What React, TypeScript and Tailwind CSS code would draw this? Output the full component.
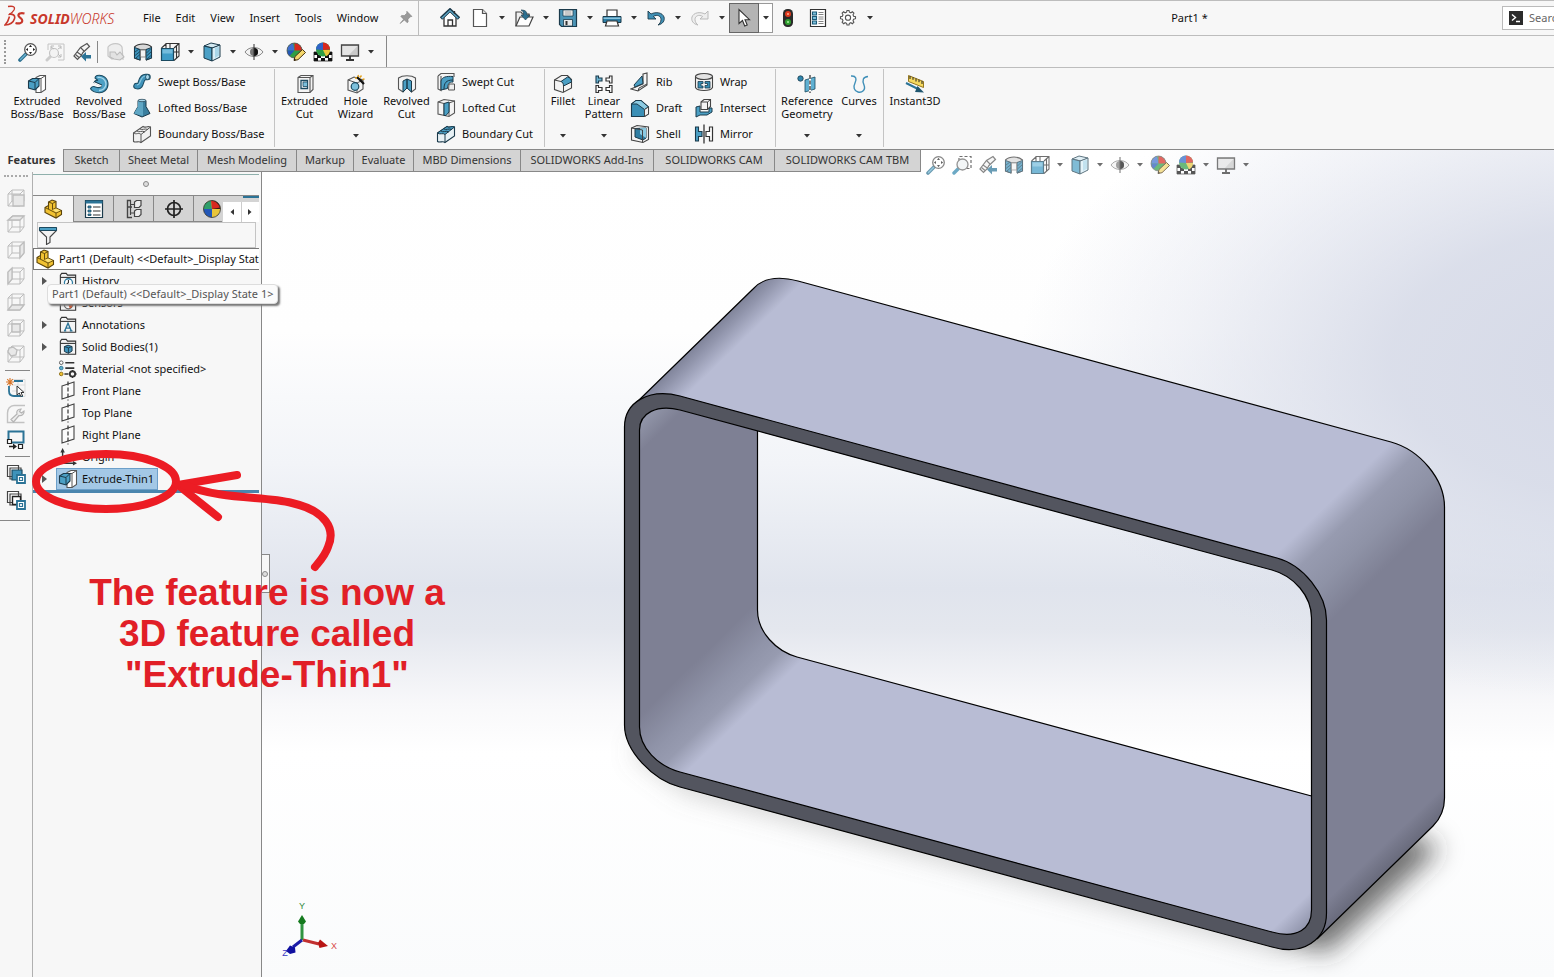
import React from "react";
import clsx from "clsx";

const icons: Record<string, React.ReactNode> = {
  home: (
    <>
      <path d="M4 9v9h12V9l-6-6z" fill="#fff" stroke="#333" strokeWidth="1.3" />
      <path d="M1 10.5 10 2l9 8.5" fill="none" stroke="#1b3a4b" strokeWidth="3.4" />
      <path d="M1.8 10.2 10 2.6l8.2 7.6" fill="none" stroke="#5fa8c8" strokeWidth="1.4" />
      <path d="M8 18v-6h4.500v6M14.500 3v3" fill="none" stroke="#333" strokeWidth="1.3" />
    </>
  ),
  page: (
    <>
      <path d="M3.500 1.500h9l4 4v13h-13z" fill="#fff" stroke="#555" strokeWidth="1.2" />
      <path d="M12.500 1.500v4h4" fill="#ddd" stroke="#555" strokeWidth="1.2" />
    </>
  ),
  open: (
    <>
      <path d="M2 18V4h5l1.500 2H15v3" fill="#eee" stroke="#444" strokeWidth="1.2" />
      <path d="M2 18 6 9h13l-4 9z" fill="#fff" stroke="#444" strokeWidth="1.2" />
      <path d="M7 2c5 0 6 2 6 5h3l-4.500 5L7 7h2.500C9.500 4 9 3 7 2z" fill="#2b6f8f" stroke="#1b3a4b" strokeWidth=".6" />
    </>
  ),
  save: (
    <>
      <path d="M1.500 1.500h17v17h-15l-2-2z" fill="#4b94b6" stroke="#1b3a4b" strokeWidth="1.2" />
      <path d="M5 2h10v6H5z" fill="#fff" stroke="#1b3a4b" strokeWidth=".8" />
      <path d="M6.500 4h7M6.500 6h7" stroke="#777" strokeWidth=".8" />
      <path d="M5.500 11.500h9v6.500h-9z" fill="#e8e8e8" stroke="#1b3a4b" strokeWidth=".8" />
      <path d="M7.500 13h2v4h-2z" fill="#333" />
    </>
  ),
  print: (
    <>
      <path d="M5 8V2h10v6" fill="#fff" stroke="#333" strokeWidth="1.2" />
      <path d="M1 8.500h18v6H1z" fill="#2c7ea6" stroke="#1b3a4b" strokeWidth="1" />
      <path d="M1.500 9.500h17v1.500h-17z" fill="#8cc5de" />
      <path d="M5 13h10l1.500 5h-13z" fill="#fff" stroke="#333" strokeWidth="1.2" />
    </>
  ),
  undo: (
    <path d="M2 3v8h8L7.300 8.500c4-2.500 7.700-.5 7.700 3 0 2.500-1.500 4.500-3 5.500 5-1 7-4.500 6-8C16.500 4.500 10 3.500 5 6z" fill="#4191b6" stroke="#1b3a4b" strokeWidth=".9" />
  ),
  redo: (
    <path d="M18 3v8h-8l2.700-2.500c-4-2.500-7.700-.5-7.700 3 0 2.500 1.500 4.500 3 5.500-5-1-7-4.500-6-8C3.500 4.500 10 3.500 15 6z" fill="#eee" stroke="#bbb" strokeWidth="1" />
  ),
  cursor: (
    <path d="M5 1.500v14l3.500-3 2.200 5.500 2.500-1-2.200-5.300h4.500z" fill="#fff" stroke="#333" strokeWidth="1.1" />
  ),
  traffic: (
    <>
      <rect x="5" y="1" width="10" height="18" rx="4.500" fill="#2b2b2b" />
      <circle cx="10" cy="6" r="3" fill="#e03a1e" />
      <circle cx="10" cy="6" r="1" fill="#ffb59a" />
      <circle cx="10" cy="14" r="3" fill="#2f9e2f" />
      <circle cx="10" cy="14" r="1" fill="#a8f0a0" />
    </>
  ),
  options: (
    <>
      <path d="M2.500 1.500h15v17h-15z" fill="#fff" stroke="#333" strokeWidth="1.2" />
      <path d="M4.500 4h4v3h-4zM4.500 8.500h4v3h-4zM4.500 13h4v3h-4z" fill="#7cc0dc" stroke="#1b5a78" strokeWidth="1.1" />
      <path d="M10.500 4.500h5M10.500 6.500h5M10.500 9h5M10.500 11h5M10.500 13.500h5M10.500 15.500h5" stroke="#777" strokeWidth=".9" />
    </>
  ),
  gear: (
    <>
      <path d="M9 2.500h2l.4 1.700 1.500.6 1.500-1 1.500 1.400-.9 1.600.6 1.500 1.900.4v2l-1.900.5-.6 1.500.9 1.500-1.500 1.500-1.500-1-1.500.6-.4 1.700H9l-.4-1.700-1.500-.6-1.500 1-1.500-1.500.9-1.500-.6-1.500-1.900-.5v-2l1.900-.4.6-1.500-.9-1.600L5.600 3.800l1.500 1 1.500-.6z" fill="#fff" stroke="#555" strokeWidth="1.100" />
      <circle cx="10" cy="9.700" r="2.600" fill="#fff" stroke="#555" strokeWidth="1.100" />
    </>
  ),
  pin: (
    <path d="M11 1.500 17.500 8l-2 .5-3 3 .2 3.500-1.200 1L8 12.500 2.500 17 7 11.500 3.500 8l1-1.200 3.500.2 3-3z" fill="#999" stroke="#777" strokeWidth=".6" />
  ),
  zoomFit: (
    <>
      <path d="m2 18 6-6" stroke="#2b6f8f" strokeWidth="3.600" strokeLinecap="round" />
      <path d="m2.500 17.500 5-5" stroke="#6cb4d2" strokeWidth="1.400" strokeLinecap="round" />
      <circle cx="12.500" cy="7.500" r="5.800" fill="#fff" stroke="#555" strokeWidth="1.300" />
      <path d="M12.500 2.800 14 5h-3zM12.500 12.200 14 10h-3zM7.800 7.500 10 6v3zM17.200 7.500 15 6v3z" fill="#222" />
    </>
  ),
  zoomAreaGray: (
    <>
      <path d="m2 18 5-5" stroke="#ccc" strokeWidth="3" strokeLinecap="round" />
      <circle cx="9" cy="11" r="4.500" fill="#f3f3f3" stroke="#c4c4c4" strokeWidth="1.200" />
      <path d="M3 2h16v16h-6M3 2v6" fill="none" stroke="#c4c4c4" strokeWidth="1" />
      <path d="m6 5 3 2M16 5l-3 2M16 15l-3-3M6 7V4h3M16 7V4h-3M16 12v3h-3" fill="none" stroke="#bbb" strokeWidth="1" />
    </>
  ),
  zoomArea: (
    <>
      <path d="M7 6V1.500h12v12h-4" fill="none" stroke="#333" strokeWidth="1.200" strokeDasharray="3 2" />
      <path d="m2 18 5-5" stroke="#2f86ad" strokeWidth="3.400" strokeLinecap="round" />
      <circle cx="10.500" cy="9.500" r="5.500" fill="#eef3f5" stroke="#666" strokeWidth="1.300" />
    </>
  ),
  prevView: (
    <>
      <path d="m2 14 3.500 3.500L9 14l2-3.500 6.500-6L15 1.500l-6.500 4L5 10z" fill="#f4f4f4" stroke="#555" strokeWidth="1.200" />
      <path d="m5 10 5 3.500M8.500 5.500 12 9M3.500 12.500l3.500 3" stroke="#555" strokeWidth="1.100" />
      <path d="m9 14.500 5-4.500v3h5v3.500h-5v3z" fill="#2b7396" />
    </>
  ),
  viewGray: (
    <>
      <path d="M2 5c4-5 12-4 14 0l1 12-5-2-6 2-4-3z" fill="#eee" stroke="#c6c6c6" strokeWidth="1.200" />
      <path d="M4 10h5l2 3 3-3 4 5-4 3-6-1-4-2z" fill="#e2e2e2" stroke="#bbb" strokeWidth="1.100" />
    </>
  ),
  section: (
    <>
      <path d="M1.500 5c4-4 13-4 17 0v11l-5 2V8H7v10l-5.500-2z" fill="#d8d8d8" stroke="#333" strokeWidth="1.100" />
      <path d="M1.500 5.500 7 7.500V18l-5.500-2zM13 7.500l5.500-2V16L13 18z" fill="#3b92bb" stroke="#1b3a4b" strokeWidth="1" />
      <path d="m2 10 4-3M2 13.500l5-4M3 16l4-3.500M13.500 11l4-4M13.500 14l5-4.500M14 17l4-3.500" stroke="#1b3a4b" strokeWidth=".8" />
      <path d="M7.500 8h5v7h-5z" fill="#f3f3f3" stroke="#666" strokeWidth=".7" />
    </>
  ),
  orient: (
    <>
      <path d="M6 6V1.500h13V14l-5 4.500M14 6l5-4.500M1.500 6l5-4.500M10 2v4M14 10h5M16.500 4v12" fill="none" stroke="#333" strokeWidth="1.100" />
      <path d="M1.500 6.500h12v12h-12z" fill="#3f9bc6" stroke="#1b4a60" strokeWidth="1.200" />
      <path d="M2.500 7.500h10v4h-10z" fill="#74bbdb" />
    </>
  ),
  cube: (
    <>
      <path d="m2 4 7-3 9 2-7 3z" fill="#d4e9f1" stroke="#1b3a4b" strokeWidth="1" />
      <path d="M2 4v12l8 3V6z" fill="#4ba0c6" stroke="#1b3a4b" strokeWidth="1" />
      <path d="m10 6 8-3v12l-8 4z" fill="#d9eef7" stroke="#1b3a4b" strokeWidth="1" />
      <path d="m13 6 4-1.500v9L13 16z" fill="#a9d6e9" />
    </>
  ),
  eye: (
    <>
      <path d="M1 10c4-6 14-6 18 0-4 6-14 6-18 0z" fill="#f2f2f2" stroke="#888" strokeWidth="1" />
      <circle cx="10" cy="10" r="4" fill="#777" />
      <path d="M10 6a4 4 0 0 1 0 8z" fill="#111" />
      <path d="M10 2v16" stroke="#333" strokeWidth="1" />
    </>
  ),
  ballPencil: (
    <>
      <circle cx="8.500" cy="8.500" r="7.500" fill="#2f9e44" />
      <path d="M8.500 8.500 7 1.100A7.500 7.500 0 0 0 1 8.500z" fill="#3f6fd0" />
      <path d="M8.500 8.500V1a7.500 7.500 0 0 1 7.500 7.500z" fill="#d8281f" />
      <path d="M8.500 8.500H1a7.500 7.500 0 0 0 2.500 5.600z" fill="#2458b8" />
      <circle cx="8.500" cy="8.500" r="7.500" fill="none" stroke="#555" strokeWidth=".8" />
      <path d="m8 18.500 1-4 7.500-7 3 3-7.500 7.200z" fill="#f3d66b" stroke="#4a3310" strokeWidth="1" />
      <path d="m8 18.500.5-2 1.500 1.500z" fill="#111" />
    </>
  ),
  ballScene: (
    <>
      <path d="M1 10h18v9H1z" fill="#fff" stroke="#222" strokeWidth=".8" />
      <path d="M1 10h4v3H1zM15 10h4v3h-4zM4 13h4v3H4zM12 13h4v3h-4zM1 16h4v3H1zM8 16h4v3H8zM15 16h4v3h-4z" fill="#111" />
      <circle cx="10" cy="7.500" r="7" fill="#2f9e44" />
      <path d="M10 8V.5A7 7 0 0 0 3 7.500z" fill="#2f63c8" />
      <path d="M10 8V.5a7 7 0 0 1 7 7z" fill="#d8281f" />
      <path d="M10 8h7a7 7 0 0 1-4 6.300z" fill="#e9c63b" />
    </>
  ),
  monitor: (
    <>
      <path d="M1.500 3h17v11h-17z" fill="#c9c9c9" stroke="#444" strokeWidth="1.300" />
      <path d="M2.500 4h15L9 13H2.500z" fill="#e4e4e4" />
      <path d="M10 14v3.500M6 18h8" stroke="#333" strokeWidth="1.800" />
    </>
  ),
  extrude: (
    <>
      <path d="M9 3.500 13 1.500h5.500v14L14 18.500H9z" fill="#fff" stroke="#555" strokeWidth="1.100" />
      <path d="M14 4.500v14M14 4.500l4.500-3M9 4.500h5" fill="none" stroke="#555" strokeWidth="1" />
      <path d="m1.500 7 4-2.500H12V12l-4 4-6.500-2z" fill="#4b9fc4" stroke="#1b3a4b" strokeWidth="1.100" />
      <path d="m1.500 7 6.500 1.500V16M8 8.500l4-4" fill="none" stroke="#1b3a4b" strokeWidth="1" />
    </>
  ),
  revolve: (
    <>
      <path d="M8 1.500c6-1.500 11 3 11 8.500 0 6-5 9-9 8.700-4-.2-7-1.700-8.500-4 1-2 3-2.700 5-1.700 3 1.200 5.500.5 6-1L5 8.500C6 6.500 7 6 9 6.500L6 4c0-1 .8-2 2-2.500z" fill="#4b9fc4" stroke="#1b4a60" strokeWidth="1.100" />
      <path d="M8.500 3.500c4-.8 8.500 2 8.500 6.500s-4 6.500-7 6.500" fill="none" stroke="#a7d6ea" strokeWidth="1.300" />
      <path d="m5 8.500 7.500 3.500" stroke="#f7f7f7" strokeWidth="1.400" />
      <path d="m5 7.500 8 3.500" stroke="#1b3a4b" strokeWidth="1" />
    </>
  ),
  sweep: (
    <>
      <path d="M4.500 14c6 2 3-9 9-9h2" fill="none" stroke="#1b4a60" strokeWidth="6.500" strokeLinecap="round" />
      <path d="M4.500 14c6 2 3-9 9-9h2" fill="none" stroke="#3f93ba" strokeWidth="4.500" strokeLinecap="round" />
      <path d="M5 12.800c4 1 2.500-8.500 8.500-8.800" fill="none" stroke="#8cc8e0" strokeWidth="1.200" />
      <ellipse cx="15.500" cy="5" rx="2" ry="2.500" fill="#a7d6ea" stroke="#1b4a60" strokeWidth=".8" />
    </>
  ),
  loft: (
    <>
      <path d="M6 2.500h8v6l4 7-8 3.500-8-3.500 4-7z" fill="#3a7f9f" stroke="#1b3a4b" strokeWidth="1" />
      <path d="M6 2.500h5V18l-9-2.500 4-7z" fill="#5fa6c4" />
      <ellipse cx="10" cy="2.500" rx="4" ry="1.200" fill="#a7d6ea" stroke="#1b3a4b" strokeWidth=".7" />
    </>
  ),
  boundary: (
    <>
      <path d="M1.500 9 11 2.500c2 2 4-1 7.500.5v9L9 18.500c-2-2-5 .5-7.500-1z" fill="#f1f1f1" stroke="#555" strokeWidth="1.100" />
      <path d="M1.500 9c3 2 5-1 7.500 1.500L18.500 3M9 10.500v8M5 7c2 2 5-1 8 1M8 5c2 1.500 5-1 8 .5" fill="none" stroke="#555" strokeWidth="1" />
    </>
  ),
  boundaryCut: (
    <>
      <path d="M1.500 9 11 2.500c2 2 4-1 7.500.5v9L9 18.500c-2-2-5 .5-7.500-1z" fill="#e7f1f5" stroke="#1b3a4b" strokeWidth="1.100" />
      <path d="M1.500 9 11 2.500c2 2 4-1 7.500.5L9 10.500c-2-2-5 .5-7.500-1.500z" fill="#4b9fc4" stroke="#1b3a4b" strokeWidth="1" />
      <path d="M9 10.500v8M5 7c2 2 5-1 8 1M8 5c2 1.500 5-1 8 .5" fill="none" stroke="#1b3a4b" strokeWidth="1" />
    </>
  ),
  cutExtrude: (
    <>
      <path d="m3 3.500 3-2h12v14l-3 3H3z" fill="#f4f4f4" stroke="#555" strokeWidth="1.100" />
      <path d="M3 3.500h12v15M15 3.500l3-2" fill="none" stroke="#555" strokeWidth="1.100" />
      <path d="M6 6.500h6.500v8H6z" fill="#fff" stroke="#1b4a60" strokeWidth="1.300" />
      <path d="M8 8h4.500v4.500H8z" fill="#7cc0dc" stroke="#1b4a60" strokeWidth=".8" />
    </>
  ),
  hole: (
    <>
      <path d="m2 6 6-3 9 3v9l-6 4-9-3z" fill="#f4f4f4" stroke="#555" strokeWidth="1.100" />
      <path d="m2 6 9 3v10M11 9l6-3" fill="none" stroke="#555" strokeWidth="1" />
      <circle cx="9" cy="12.500" r="3.800" fill="#7cc0dc" stroke="#1b4a60" strokeWidth="1.200" />
      <path d="m11 3 7 7" stroke="#111" strokeWidth="2.200" />
      <path d="m12 1 .8 2M15.500 1.500 14 3.500M18.500 5l-2 .5M9 4h2" stroke="#e4a11b" strokeWidth="1.400" />
    </>
  ),
  cutRevolve: (
    <>
      <path d="M1.500 4c4-3 13-3 17 0v11l-4 3-4.500-5-4 5-4.500-3z" fill="#f4f4f4" stroke="#555" strokeWidth="1.100" />
      <path d="M10 5v9l-4 4V7zM10 5l4.500 2v11L10 14z" fill="#4b9fc4" stroke="#1b3a4b" strokeWidth="1" />
    </>
  ),
  cutSweep: (
    <>
      <path d="M2 4 5 1.500h13V5M2 4v13l3 1.500V4" fill="#f4f4f4" stroke="#555" strokeWidth="1.100" />
      <path d="M5 18V9c1-4 5-5 12-4.500V10c-4 0-5 1.500-5.500 6.500z" fill="#4b9fc4" stroke="#1b3a4b" strokeWidth="1" />
      <path d="M8 17c0-6 2-9 9-9" fill="none" stroke="#1b3a4b" strokeWidth="1" />
      <path d="M13 12h5.500v6h-6z" fill="#eee" stroke="#555" strokeWidth="1" />
    </>
  ),
  cutLoft: (
    <>
      <path d="m2 4 6-2.500L18.500 3v12L13 18.500 2 16z" fill="#f4f4f4" stroke="#555" strokeWidth="1.100" />
      <path d="M2 4l6 1.500v12M13 5l5.500-2M13 5v13" fill="none" stroke="#555" strokeWidth="1" />
      <path d="M8 5.500 13 4v10l-3 3.500H8z" fill="#4b9fc4" stroke="#1b3a4b" strokeWidth="1" />
    </>
  ),
  fillet: (
    <>
      <path d="m1.500 6 7-4.500h6l4 4V14L10 18.500l-8.500-3z" fill="#f4f4f4" stroke="#444" strokeWidth="1.100" />
      <path d="M8 7.500 14.500 3c2.500.5 4 2.500 4 5L10.500 12c0-2.500-1-4-2.500-4.500z" fill="#4b9fc4" stroke="#1b3a4b" strokeWidth="1" />
      <path d="m1.500 6 6.500 1.500M10.500 12v6" stroke="#444" strokeWidth="1" />
    </>
  ),
  linear: (
    <>
      <path d="M2 2h2.500v2H8v3H4.500v2H2z" fill="#6cb4d2" stroke="#1b3a4b" strokeWidth="1.100" />
      <path d="M18 2h-2.500v2H12v3h3.500v2H18zM2 11.500h2.500v2H8v3H4.500v2H2zM18 11.500h-2.500v2H12v3h3.500v2H18z" fill="#fff" stroke="#333" strokeWidth="1.200" />
    </>
  ),
  rib: (
    <>
      <path d="m13 2 4-1v12l-9 6-7-2 12-5z" fill="#f4f4f4" stroke="#444" strokeWidth="1.100" />
      <path d="m12 4-8 9 1 2 8-3.500z" fill="#4b9fc4" stroke="#1b3a4b" strokeWidth="1" />
      <path d="m8 19 1-3 8-4" fill="none" stroke="#444" strokeWidth="1" />
    </>
  ),
  draft: (
    <>
      <path d="M1.500 6 6 2.500h5l7.500 6.500v7l-4 2.500h-13z" fill="#3a8fb6" stroke="#1b3a4b" strokeWidth="1.100" />
      <path d="M1.500 6 6 2.500h5L18.500 9l-4 2.500L7 6z" fill="#8ccbe3" stroke="#1b3a4b" strokeWidth="1" />
      <path d="M14.500 11.500 18.500 9v7l-4 2.500z" fill="#f1f1f1" stroke="#444" strokeWidth="1" />
    </>
  ),
  shell: (
    <>
      <path d="M1.500 4 7 1.500l11.500 1.500v12.500l-5.500 3L1.500 16z" fill="#f4f4f4" stroke="#444" strokeWidth="1.100" />
      <path d="M5 4.500 16 4v10l-3 2-8-3z" fill="#2f7ea3" stroke="#1b3a4b" strokeWidth="1" />
      <path d="m10 4.300 6-.3v10l-6-4z" fill="#8ccbe3" />
      <path d="M1.500 4 12.500 6v12.500" fill="none" stroke="#444" strokeWidth="1" />
    </>
  ),
  wrap: (
    <>
      <path d="M1.500 4.500v11c2 4 15 4 17 0v-11" fill="#f4f4f4" stroke="#444" strokeWidth="1.100" />
      <ellipse cx="10" cy="4.500" rx="8.500" ry="3" fill="#e3e3e3" stroke="#444" strokeWidth="1.100" />
      <path d="M4 9.500h5v2H7v2.500h2v2H4zM11 9.500h5v6.500h-5v-2.500h2.500v-2H11z" fill="#3a8fb6" stroke="#1b3a4b" strokeWidth=".8" />
    </>
  ),
  intersect: (
    <>
      <path d="M2 9l4-1v6h9v-4h3v4l-5 3H6l-4 2z" fill="#4b9fc4" stroke="#1b3a4b" strokeWidth="1" />
      <path d="m7 4 3-2.500h6.500v7l-3 3H7z" fill="#f4f4f4" stroke="#444" strokeWidth="1.100" />
      <path d="M7 4h6.500v7.500M13.500 4l3-2.500" fill="none" stroke="#444" strokeWidth="1" />
    </>
  ),
  mirror: (
    <>
      <path d="M1.500 3h3v4.500h3.500v5H4.500V17h-3z" fill="#4b9fc4" stroke="#1b3a4b" strokeWidth="1.100" />
      <path d="M18.500 3h-3v4.500H12v5h3.500V17h3z" fill="#fff" stroke="#333" strokeWidth="1.200" />
      <path d="M10 .5v19" stroke="#222" strokeWidth="1.200" />
    </>
  ),
  refGeo: (
    <>
      <circle cx="3.500" cy="4.500" r="2.700" fill="#2f86ad" stroke="#1b3a4b" strokeWidth=".8" />
      <path d="m8 6 10-3v12L8 18z" fill="#5fb0d2" stroke="#1b4a60" strokeWidth=".8" />
      <path d="M13 1v18" stroke="#fff" strokeWidth="2" />
      <path d="M13 1v18" stroke="#222" strokeWidth="1.200" strokeDasharray="4 1.500" />
    </>
  ),
  curves: (
    <path d="M2 2h1c4 0 5 3 3 7s-1 8 3 9 8-2 6-7-1-8 4-8.500" fill="none" stroke="#3f8fb8" strokeWidth="1.400" />
  ),
  instant: (
    <>
      <path d="m3.500 1.500 15 6v6l-15-6z" fill="#f5d95f" stroke="#8a6a10" strokeWidth=".9" />
      <path d="M5 2v3M8 3.300v2.500M11 4.500v3M14 5.700v2.500M17 7v3" stroke="#222" strokeWidth="1" />
      <path d="m1 9 12 6" stroke="#2b7396" strokeWidth="2" />
      <path d="m12.500 12 6.500 6.500-9-.5z" fill="#1f566f" />
    </>
  ),
  part: (
    <>
      <path d="M2 8.500 5.500 6.500V3L9 1l4 1.500V9l5.500 2.500v4L13 19 2 13.500z" fill="#f1c232" stroke="#5a430a" strokeWidth="1.100" />
      <path d="m5.500 3 4 1.500L13 2.500M9.500 4.500v6L13 9M2 8.500 13 14v5M13 14l5.500-2.500M5.500 6.500v3.500" fill="none" stroke="#5a430a" strokeWidth=".9" />
      <path d="m10 10.800 3-1.200 4.500 2L13 13.300z" fill="#fbe27a" />
    </>
  ),
  property: (
    <>
      <path d="M1.500 1.500h17v17h-17z" fill="#fff" stroke="#1b3a4b" strokeWidth="1.200" />
      <path d="M1.500 1.500h17V4.500h-17z" fill="#2b7396" />
      <path d="M4 7h3v2H4zM4 11h3v2H4zM4 15h3v1.500H4z" fill="#3f93ba" stroke="#1b4a60" strokeWidth=".8" />
      <path d="M9 8h7.500M9 12h7.500M9 16h7.500" stroke="#333" strokeWidth="1.200" />
    </>
  ),
  config: (
    <>
      <path d="M7 1.500H3.500v17H8M3.500 8H8" fill="none" stroke="#444" strokeWidth="1.400" />
      <path d="M6.500 1.500V16M6.500 5.500H11M6.500 14H11" fill="none" stroke="#444" strokeWidth="1.200" />
      <path d="m10.500 3 2-1.500H17v5l-2 2h-4.500zM10.500 12l2-1.500H17v5l-2 2h-4.500z" fill="#eee" stroke="#444" strokeWidth="1.200" />
    </>
  ),
  target: (
    <>
      <circle cx="10" cy="10" r="6.500" fill="none" stroke="#222" strokeWidth="1.700" />
      <path d="M10 1v18M1 10h18" stroke="#222" strokeWidth="1.700" />
    </>
  ),
  ball: (
    <>
      <circle cx="10" cy="10" r="8.500" fill="#e9c63b" />
      <path d="M10 10 9 1.500A8.500 8.500 0 0 0 1.500 10z" fill="#2f9e6a" />
      <path d="M10 10V1.500A8.500 8.500 0 0 1 18.500 10z" fill="#3d1a18" />
      <path d="M10 10H1.500a8.500 8.500 0 0 0 8.500 8.500z" fill="#2458b8" />
      <path d="M10 10 9 1.500c4 0 7 3 9 7z" fill="#d8281f" />
      <circle cx="10" cy="10" r="8.500" fill="none" stroke="#333" strokeWidth=".8" />
    </>
  ),
  filter: (
    <>
      <path d="M1.500 3h17v2.500L12 12v5.500l-3.500 2V12L1.500 5.500z" fill="#f2f2f2" stroke="#444" strokeWidth="1.100" />
      <path d="M1.500 2.500h17v3h-17z" fill="#4b9fc4" stroke="#1b4a60" strokeWidth="1" />
    </>
  ),
  history: (
    <>
      <path d="M1.500 18V3.500l1.500-2h5l1.500 2h9V18z" fill="#f4f4f4" stroke="#333" strokeWidth="1.200" />
      <path d="M1.500 6h17" stroke="#333" strokeWidth="1.200" />
      <circle cx="10.500" cy="12" r="4.500" fill="#fff" stroke="#2f7ea3" strokeWidth="1.400" />
      <path d="M10.500 9v3l-2 1.500" fill="none" stroke="#333" strokeWidth="1.200" />
    </>
  ),
  sensors: (
    <>
      <path d="M1.500 18V3.500l1.500-2h5l1.500 2h9V18z" fill="#f4f4f4" stroke="#333" strokeWidth="1.200" />
      <path d="M1.500 6h17" stroke="#333" strokeWidth="1.200" />
      <circle cx="10.500" cy="12" r="4.500" fill="#fff" stroke="#666" strokeWidth="1.400" />
      <path d="M10.500 12 14 9a4.500 4.500 0 0 1-2 7.200z" fill="#d9542b" />
    </>
  ),
  annotations: (
    <>
      <path d="M1.500 18V3.500l1.500-2h5l1.500 2h9V18z" fill="#f4f4f4" stroke="#333" strokeWidth="1.200" />
      <path d="M1.500 6h17" stroke="#333" strokeWidth="1.200" />
      <path d="M6.500 16 10 8l3.500 8M7.800 13.500h4.500M5.500 16.500h2.500M12 16.500h3" fill="none" stroke="#2b7396" strokeWidth="1.500" />
    </>
  ),
  bodies: (
    <>
      <path d="M1.500 18V3.500l1.500-2h5l1.500 2h9V18z" fill="#f4f4f4" stroke="#333" strokeWidth="1.200" />
      <path d="M1.500 6h17" stroke="#333" strokeWidth="1.200" />
      <path d="m6 9.500 4-1.500 4.500 1.500v5L10.500 17 6 15z" fill="#3f93ba" stroke="#1b3a4b" strokeWidth="1.100" />
      <path d="m6 9.500 4.500 1.500v6M10.500 11l4-1.500" fill="none" stroke="#1b3a4b" strokeWidth="1" />
    </>
  ),
  material: (
    <>
      <circle cx="2.500" cy="3" r="2" fill="#fff" stroke="#555" />
      <circle cx="2.500" cy="9" r="2" fill="#5fb0c8" stroke="#2b7396" />
      <circle cx="2.500" cy="15.500" r="2" fill="#f1c232" stroke="#8a6a10" />
      <path d="M7 3h10M7 9h10M6 15.500h4" stroke="#333" strokeWidth="1.800" />
      <circle cx="15" cy="15.500" r="3" fill="none" stroke="#333" strokeWidth="2" />
      <path d="M15 11v2M15 18v2M10.500 15.500h2M17.500 15.500h2" stroke="#333" strokeWidth="1.500" />
    </>
  ),
  plane: (
    <>
      <path d="m4 5 12-4v13L4 18z" fill="#fbfbfb" stroke="#444" strokeWidth="1.100" />
      <path d="M10 .5v19" stroke="#333" strokeWidth="1.200" strokeDasharray="4 2" />
    </>
  ),
  origin: (
    <>
      <path d="M4 17V4M4 17h13M4 17l3-6" fill="none" stroke="#333" strokeWidth="1.600" />
      <path d="m4 0 2.500 5h-5zM20 17l-4.500 2.500v-5z" fill="#333" />
    </>
  ),
  sketchStar: (
    <>
      <path d="M6 1.500h13M19 1.500v17H6M12 1v18M6 7h13M6 13h13" fill="none" stroke="#ddd" />
      <path d="M3 8v5c0 3 2 5 5 5h9M8 3h9" fill="none" stroke="#2b7396" strokeWidth="1.800" />
      <path d="M4 0v8M0 4h8M1.200 1.200l5.600 5.600M6.800 1.200 1.200 6.800" stroke="#d9772b" strokeWidth="1.100" />
      <path d="M11 8v9l2.300-2 1.500 3.500 1.700-.8L15 14.500h3z" fill="#fff" stroke="#333" />
    </>
  ),
  wrench: (
    <>
      <path d="M19 1.500H8C4 1.500 1.500 5 1.500 9v9.500h17" fill="none" stroke="#c2c2c2" strokeWidth="1.400" />
      <path d="M5 15.500 11 10c-1-3 1-5 4-5l-1.500 2.500 2 1.500L18 7c.5 3-2 5-5 4.500L7.500 18z" fill="#eee" stroke="#b5b5b5" strokeWidth="1.200" />
    </>
  ),
  screen: (
    <>
      <path d="M2.500 1.500h15v11h-15z" fill="#f7f7f7" stroke="#2b7396" strokeWidth="2" />
      <path d="M1.500 9.500h4v4h-4zM12.500 14.500h4v4h-4z" fill="#fff" stroke="#222" strokeWidth="1.200" />
      <path d="M3 16.500h6" stroke="#222" strokeWidth="1.500" />
      <path d="M7 13.500v6l4-3z" fill="#222" />
    </>
  ),
  stackA: (
    <>
      <path d="M1.500 1.500h11v11h-11zM4 4h11v11H4z" fill="#fff" stroke="#444" strokeWidth="1.200" />
      <path d="M6 6h10v10H6z" fill="#3f93ba" stroke="#1b4a60" strokeWidth="1.200" />
      <path d="M11 11h8v8h-8z" fill="#fff" stroke="#2b7396" strokeWidth="1.800" />
      <path d="M13.500 13.500h3v3h-3z" fill="#fff" stroke="#2b7396" strokeWidth="1.200" />
    </>
  ),
  stackB: (
    <>
      <path d="M1.500 1.500h11v11h-11zM4 4h11v11H4z" fill="#fff" stroke="#444" strokeWidth="1.200" />
      <path d="M6.500 6.500h8v8h-8z" fill="#fff" stroke="#222" strokeWidth="1.400" />
      <path d="M11 11h8v8h-8z" fill="#fff" stroke="#2b7396" strokeWidth="1.800" />
      <path d="M13.500 13.500h3v3h-3z" fill="#fff" stroke="#2b7396" strokeWidth="1.200" />
    </>
  ),
};

// wireframe cubes of the standard views, one face tinted in each
const cubeFaces = [
  "M7 7h11v11H7z",
  "M2 6 7 2h11l-4 4z",
  "M14 6l4-4v11l-4 5z",
  "M2 6l4-4v11l-4 5z",
  "M2 18l4-5h12l-4 5z",
  "M6 6h8v8H6z",
  "M7 3l4 3-1 5-5 1-3-4 1-4z",
];

const Icon = ({ name, className }: { name: string; className?: string }) => (
  <svg viewBox="0 0 20 20" className={clsx("shrink-0", className ?? "h-5 w-5")} aria-hidden="true">
    {icons[name]}
  </svg>
);

const Arrow = ({ className }: { className?: string }) => (
  <svg viewBox="0 0 6 4" className={clsx("h-1 w-1.5", className)} aria-hidden="true">
    <path d="M0 0h6L3 3.500z" fill="#333" />
  </svg>
);

const Caret = ({ label, className }: { label: string; className: string }) => (
  <button aria-label={label} className={clsx("flex h-full shrink-0 items-center justify-center", className)}>
    <Arrow />
  </button>
);

const Tool = ({ name, label, className }: { name: string; label: string; className: string }) => (
  <button aria-label={label} className={clsx("flex shrink-0 items-center justify-center", className)}>
    <Icon name={name} />
  </button>
);

const menus = ["File", "Edit", "View", "Insert", "Tools", "Window"];

const TopBar = () => (
  <header className="flex h-9 overflow-hidden border-y border-[#bdbdbd]">
    <div className="flex w-[419px] shrink-0 items-center border-r border-[#bdbdbd]">
      <div className="flex w-[135px] items-center text-[#c8372b]">
        <svg viewBox="0 0 28 28" className="ml-1 h-7 w-7 shrink-0" fill="none" stroke="currentColor" aria-hidden="true">
          <path d="M4 2.500c5.500-.8 7.500.3 6 3.500-1 2-3 3.500-5.500 5" strokeWidth="1.300" />
          <path d="M5 10.200c4-.4 6.500 1 5.500 4.500-1 3.300-4 6-9.500 6.300 2-2 3.500-4.500 4.500-8.500" strokeWidth="1.600" />
          <path d="M20.500 9.500c-4-1-6.500.2-6 2.300.5 2 4 2.700 3.800 5-.2 2.500-3.500 3.200-6.800 2.200" strokeWidth="2.200" />
        </svg>
        <span className="-ml-0.5 text-[14px] italic">
          <b>SOLID</b>
          <span className="font-light">WORKS</span>
        </span>
      </div>
      <nav className="flex flex-1 items-center gap-[15px] pl-2 text-[11px]">
        {menus.map((menu) => (
          <button key={menu}>{menu}</button>
        ))}
      </nav>
      <button aria-label="Pin menu" className="flex w-6 shrink-0 justify-center">
        <Icon name="pin" className="h-4 w-4" />
      </button>
    </div>
    <div className="flex shrink-0 items-center pl-4">
      <Tool name="home" label="Home" className="w-[30px]" />
      {["page", "open", "save", "print", "undo", "redo"].map((name) => (
        <React.Fragment key={name}>
          <Tool name={name} label={name} className="w-[30px]" />
          <Caret label={`${name} options`} className="w-3.5" />
        </React.Fragment>
      ))}
      <button aria-label="Select" className="flex h-[30px] w-[30px] items-center justify-center border border-[#666] bg-[#b4b4b4]">
        <Icon name="cursor" />
      </button>
      <button aria-label="Select options" className="flex h-[30px] w-3.5 items-center justify-center border border-l-0 border-[#999] bg-white">
        <Arrow />
      </button>
      <Tool name="traffic" label="Rebuild" className="w-[30px]" />
      <Tool name="options" label="File properties" className="w-[30px]" />
      <Tool name="gear" label="Options" className="w-[30px]" />
      <Caret label="Options menu" className="w-3.5" />
    </div>
    <h1 className="flex flex-1 items-center justify-center text-[11px]">Part1 *</h1>
    <label className="my-[5px] flex w-[52px] shrink-0 items-center gap-1.5 overflow-hidden border border-r-0 border-[#bbb] bg-white pl-1.5">
      <svg viewBox="0 0 14 14" className="h-3.5 w-3.5 shrink-0" aria-hidden="true">
        <path d="M0 0h14v14H0z" fill="#2b2b2b" />
        <path d="m3 3.500 3.500 3L3 9.500M7 10.500h4" fill="none" stroke="#fff" strokeWidth="1.400" />
      </svg>
      <input aria-label="Search commands" placeholder="Search Commands" className="w-32 shrink-0 text-[11px] outline-none placeholder:text-[#666]" />
    </label>
  </header>
);

const ViewBar = () => (
  <div className="flex h-8 border-b border-[#bdbdbd]">
    <div className="flex w-[387px] items-center border-r border-[#888]">
      <div className="ml-1 h-6 w-2.5 border-l-2 border-dotted border-[#999]" />
      {["zoomFit", "zoomAreaGray", "prevView"].map((name) => (
        <Tool key={name} name={name} label={name} className="w-[27px]" />
      ))}
      <div className="mr-1 ml-0.5 h-[22px] w-px bg-[#888]" />
      <Tool name="viewGray" label="3D views" className="w-[27px]" />
      <Tool name="section" label="Section view" className="w-[27px]" />
      {["orient", "cube", "eye"].map((name) => (
        <React.Fragment key={name}>
          <Tool name={name} label={name} className="w-[27px]" />
          <Caret label={`${name} options`} className="w-[15px]" />
        </React.Fragment>
      ))}
      {["ballPencil", "ballScene", "monitor"].map((name) => (
        <Tool key={name} name={name} label={name} className="w-[27px]" />
      ))}
      <Caret label="View settings options" className="w-[15px]" />
    </div>
  </div>
);

const BigButton = ({
  icon,
  label,
  menu,
  className,
}: {
  icon: string;
  label: string;
  menu?: boolean;
  className: string;
}) => (
  <button className={clsx("flex h-full shrink-0 flex-col items-center pt-1.5 pb-[11px] leading-[13px]", className)}>
    <Icon name={icon} />
    <span className="whitespace-pre-line">{label}</span>
    {menu && <Arrow className="mt-auto" />}
  </button>
);

const SmallColumn = ({ items, className }: { items: string[][]; className: string }) => (
  <div className={clsx("flex shrink-0 flex-col pt-px", className)}>
    {items.map(([icon, label]) => (
      <button key={label} className="flex h-[26px] items-center gap-1.5 whitespace-nowrap">
        <Icon name={icon} />
        {label}
      </button>
    ))}
  </div>
);

const Divider = () => <div className="mt-px mb-0.5 w-px shrink-0 bg-[#c4c4c4]" />;

const Ribbon = () => (
  <div className="flex h-[81px] overflow-hidden text-[11px]">
    <div className="flex w-[274px] shrink-0 pl-1.5">
      <BigButton icon="extrude" label={"Extruded\nBoss/Base"} className="w-[62px]" />
      <BigButton icon="revolve" label={"Revolved\nBoss/Base"} className="w-[62px]" />
      <SmallColumn
        className="ml-0.5 w-[140px]"
        items={[["sweep", "Swept Boss/Base"], ["loft", "Lofted Boss/Base"], ["boundary", "Boundary Boss/Base"]]}
      />
    </div>
    <Divider />
    <div className="flex w-[269px] shrink-0 pl-1">
      <BigButton icon="cutExtrude" label={"Extruded\nCut"} className="w-[51px]" />
      <BigButton icon="hole" label={"Hole\nWizard"} menu className="w-[51px]" />
      <BigButton icon="cutRevolve" label={"Revolved\nCut"} className="w-[51px]" />
      <SmallColumn
        className="ml-1 w-[104px]"
        items={[["cutSweep", "Swept Cut"], ["cutLoft", "Lofted Cut"], ["boundaryCut", "Boundary Cut"]]}
      />
    </div>
    <Divider />
    <div className="flex w-[230px] shrink-0">
      <BigButton icon="fillet" label="Fillet" menu className="w-9" />
      <BigButton icon="linear" label={"Linear\nPattern"} menu className="w-[46px]" />
      <SmallColumn className="ml-[3px] w-16" items={[["rib", "Rib"], ["draft", "Draft"], ["shell", "Shell"]]} />
      <SmallColumn className="w-20" items={[["wrap", "Wrap"], ["intersect", "Intersect"], ["mirror", "Mirror"]]} />
    </div>
    <Divider />
    <div className="flex w-[107px] shrink-0">
      <BigButton icon="refGeo" label={"Reference\nGeometry"} menu className="w-[62px]" />
      <BigButton icon="curves" label="Curves" menu className="w-[42px]" />
    </div>
    <Divider />
    <BigButton icon="instant" label="Instant3D" className="w-[62px]" />
  </div>
);

const tabs = [
  ["Sketch", "w-14"],
  ["Sheet Metal", "w-[78px]"],
  ["Mesh Modeling", "w-[99px]"],
  ["Markup", "w-[57px]"],
  ["Evaluate", "w-[60px]"],
  ["MBD Dimensions", "w-[107px]"],
  ["SOLIDWORKS Add-Ins", "w-[133px]"],
  ["SOLIDWORKS CAM", "w-[121px]"],
  ["SOLIDWORKS CAM TBM", "w-[146px]"],
];

const TabRow = () => (
  <div className="relative flex h-[23px] font-['Noto_Sans','Open_Sans',sans-serif] text-[11px] text-[#333]">
    <button className="w-16 shrink-0 border-r border-[#888] bg-[#f7f7f7] font-bold">Features</button>
    {tabs.map(([label, width]) => (
      <button
        key={label}
        className={clsx("shrink-0 border-y border-r border-[#888] bg-[#d4d4d4] whitespace-nowrap", width)}
      >
        {label}
      </button>
    ))}
    <div className="flex flex-1 border-t border-[#888] pl-0.5">
      <div className="flex h-[30px] shrink-0 items-center opacity-70">
        {["zoomFit", "zoomArea", "prevView", "section"].map((name) => (
          <Tool key={name} name={name} label={name} className="w-[26px]" />
        ))}
        {["orient", "cube", "eye"].map((name) => (
          <React.Fragment key={name}>
            <Tool name={name} label={name} className="w-[26px]" />
            <Caret label={`${name} options`} className="w-3.5" />
          </React.Fragment>
        ))}
        <Tool name="ballPencil" label="Edit appearance" className="w-[26px]" />
        {["ballScene", "monitor"].map((name) => (
          <React.Fragment key={name}>
            <Tool name={name} label={name} className="w-[26px]" />
            <Caret label={`${name} options`} className="w-3.5" />
          </React.Fragment>
        ))}
      </div>
    </div>
  </div>
);

const outer =
  "M624.500 427C624.500 402 649 388 680 396L1277 558C1303 565 1326.500 594 1326.500 620V913C1326.500 940 1303 956 1272 947L680 787C653 780 624.500 751 624.500 725Z";
const inner =
  "M639.500 430C639.500 413 657 404 680 410L1272 570C1294 576 1311.500 596 1311.500 618V910C1311.500 929 1297 939 1272 932L680 772C658 766 639.500 748 639.500 727Z";
const opening = "M757.500 431V610C757.500 632 776 651 797 657L1311.500 796V618C1311.500 596 1294 576 1272 570Z";
const silhouette =
  "M637 402L753 289C762 279 775 275 798 281L1391 442C1420 450 1444.500 479 1444.500 507V798C1444.500 811 1440 819 1433 826L1317 939";

const Scene = () => (
  <svg
    viewBox="0 149 1554 828"
    preserveAspectRatio="xMidYMid slice"
    className="absolute inset-0 h-full w-full"
    role="img"
    aria-label="Thin extruded rectangular tube"
  >
    <defs>
      <linearGradient id="sky" x1="0" y1="149" x2="0" y2="977" gradientUnits="userSpaceOnUse">
        <stop offset="0" stopColor="#fff" />
        <stop offset=".22" stopColor="#fefefe" />
        <stop offset=".38" stopColor="#f2f4f8" />
        <stop offset=".53" stopColor="#e0e4ed" />
        <stop offset=".58" stopColor="#e4e7ee" />
        <stop offset=".67" stopColor="#f8f8fa" />
        <stop offset=".73" stopColor="#fff" />
        <stop offset="1" stopColor="#fafbfc" />
      </linearGradient>
      <radialGradient id="haze" cx="0" cy="0" r="1" gradientUnits="userSpaceOnUse" gradientTransform="translate(1640 360) scale(620 340)">
        <stop offset="0" stopColor="#d5d9e7" />
        <stop offset=".4" stopColor="#d7dbe8" stopOpacity=".9" />
        <stop offset=".75" stopColor="#d9ddea" stopOpacity=".35" />
        <stop offset="1" stopColor="#d9ddea" stopOpacity="0" />
      </radialGradient>
      <linearGradient id="skin" x1="640" y1="398" x2="1238.600" y2="1015.500" gradientUnits="userSpaceOnUse">
        <stop offset="0" stopColor="#7f8399" />
        <stop offset=".012" stopColor="#9195ac" />
        <stop offset=".035" stopColor="#b8bcd4" />
        <stop offset=".645" stopColor="#b8bcd4" />
        <stop offset=".675" stopColor="#979bb0" />
        <stop offset=".708" stopColor="#8e92a6" />
        <stop offset=".745" stopColor="#7e8094" />
        <stop offset=".975" stopColor="#7e8094" />
        <stop offset="1" stopColor="#686a7b" />
      </linearGradient>
      <linearGradient id="lining" x1="640" y1="398" x2="1238.600" y2="1015.500" gradientUnits="userSpaceOnUse">
        <stop offset=".02" stopColor="#9195a8" />
        <stop offset=".045" stopColor="#7e8094" />
        <stop offset=".265" stopColor="#7e8094" />
        <stop offset=".305" stopColor="#9094a9" />
        <stop offset=".325" stopColor="#979bb0" />
        <stop offset=".35" stopColor="#b8bcd4" />
        <stop offset=".955" stopColor="#b8bcd4" />
        <stop offset=".985" stopColor="#8b8fa6" />
      </linearGradient>
      <filter id="soft" x="-20%" y="-30%" width="140%" height="160%">
        <feGaussianBlur stdDeviation="13" />
      </filter>
    </defs>
    <path d="M0 149h1554v828H0z" fill="url(#sky)" />
    <path d="M0 149h1554v828H0z" fill="url(#haze)" />
    <g filter="url(#soft)">
      <path d="M640 745 690 782 1290 942" fill="none" stroke="#777" strokeWidth="20" opacity=".4" />
      <path d="M1290 935 1325 945 1428 850 1400 838z" fill="#333" stroke="#333" strokeWidth="14" opacity=".7" />
    </g>
    <path d={`${silhouette}L900 840L637 700Z${opening}`} fill="url(#skin)" fillRule="evenodd" />
    <path d={silhouette} fill="none" stroke="#000" strokeWidth="1.200" />
    <path d={`${inner}${opening}`} fill="url(#lining)" fillRule="evenodd" />
    <path d="M757.500 431V610C757.500 632 776 651 797 657L1311.500 796" fill="none" stroke="#000" strokeWidth="1.200" />
    <path d={`${outer}${inner}`} fill="#53555f" fillRule="evenodd" stroke="#000" strokeWidth="1.200" />
    <g fontFamily="Liberation Sans, sans-serif" fontSize="9" textAnchor="middle">
      <path d="M302 940V920" stroke="#2f9440" strokeWidth="3" />
      <path d="m302 915 4 6.500-2 2.500h-4l-2-2.500z" fill="#157a1f" />
      <path d="m303 940 16 4" stroke="#c23030" strokeWidth="3" />
      <path d="m328 946-8.500 2-1.500-5 2-3.500z" fill="#b81414" />
      <path d="m302 940-9 7" stroke="#1c1ca8" strokeWidth="3" />
      <path d="m286 951 4-5.500 5 2 .5 5-5.500 1.500z" fill="#1010a0" />
      <text x="302" y="909" fill="#2f8a3c">Y</text>
      <text x="334" y="949" fill="#d84848">X</text>
      <text x="285" y="956" fill="#3838c0">Z</text>
    </g>
  </svg>
);

const RailButton = ({ label, children }: { label: string; children: React.ReactNode }) => (
  <button aria-label={label} className="flex h-[26px] w-8 items-center justify-center">
    {children}
  </button>
);

const Rail = () => (
  <aside className="flex w-[33px] shrink-0 flex-col border-r border-[#b0b0b0] bg-[#f7f7f7]">
    <div className="mx-1 mt-[3px] mb-2 border-t-2 border-dotted border-[#aaa]" />
    {cubeFaces.map((face) => (
      <RailButton key={face} label="View cube">
        <svg viewBox="0 0 20 20" className="h-5 w-5" fill="none" stroke="#bdbdbd" aria-hidden="true">
          <path d="M2 6h12v12H2zM2 6l4-4h12v11l-4 5M14 6l4-4M6 2v11h12M2 18l4-5" />
          <path d={face} fill="#e8e8e8" strokeWidth="1.300" />
        </svg>
      </RailButton>
    ))}
    <div className="mt-[3px] mr-0.5 mb-1 ml-[5px] h-px bg-[#888]" />
    <RailButton label="Sketch"><Icon name="sketchStar" /></RailButton>
    <RailButton label="Repair"><Icon name="wrench" /></RailButton>
    <RailButton label="Screen"><Icon name="screen" /></RailButton>
    <div className="mt-[3px] mr-0.5 mb-1 ml-[5px] h-px bg-[#888]" />
    <RailButton label="Group"><Icon name="stackA" /></RailButton>
    <RailButton label="Ungroup"><Icon name="stackB" /></RailButton>
    <div className="mt-[7px] mr-0.5 h-px bg-[#888]" />
  </aside>
);

const treeItems = [
  { icon: "history", label: "History", expandable: true },
  { icon: "sensors", label: "Sensors" },
  { icon: "annotations", label: "Annotations", expandable: true },
  { icon: "bodies", label: "Solid Bodies(1)", expandable: true },
  { icon: "material", label: "Material <not specified>" },
  { icon: "plane", label: "Front Plane" },
  { icon: "plane", label: "Top Plane" },
  { icon: "plane", label: "Right Plane" },
  { icon: "origin", label: "Origin" },
  { icon: "extrude", label: "Extrude-Thin1", expandable: true, selected: true },
];

const FeatureTree = () => (
  <section className="w-[229px] shrink-0 border-r border-[#888] bg-[#f7f7f7] pr-0.5 text-[11px]">
    <div className="flex h-6 flex-col items-center border-b border-[#888]">
      <div className="mt-0.5 h-px w-full bg-[#8fb0ac]" />
      <div className="mt-1.5 h-1.5 w-1.5 rounded-full border border-[#888] bg-[#ddd]" />
    </div>
    <div className="flex h-[26px] overflow-hidden">
      <button aria-label="Feature manager" className="flex w-[41px] shrink-0 items-center justify-center border-r border-[#888]">
        <Icon name="part" />
      </button>
      {["property", "config", "target"].map((name) => (
        <button
          key={name}
          aria-label={name}
          className="flex w-10 shrink-0 items-center justify-center border-r border-b border-[#888] bg-[#d4d4d4]"
        >
          <Icon name={name} />
        </button>
      ))}
      <button aria-label="Display manager" className="flex w-7 shrink-0 items-center justify-end border-b border-[#888] bg-[#d4d4d4]">
        <Icon name="ball" />
      </button>
      <div className="flex flex-1 flex-col bg-[#d4d4d4] pl-px">
        <div className="ml-5 h-1.5 w-4 border-t-2 border-[#2b7396] bg-[#d4d4d4]" />
        <div className="flex flex-1 bg-white">
          <button aria-label="Previous tabs" className="flex flex-1 items-center justify-center border-r border-[#ccc]">
            <Arrow className="rotate-90" />
          </button>
          <button aria-label="Next tabs" className="flex flex-1 items-center justify-center">
            <Arrow className="-rotate-90" />
          </button>
        </div>
      </div>
    </div>
    <label className="mr-[3px] ml-1 flex h-[26px] items-center border border-[#c4c4c4]">
      <Icon name="filter" />
      <input aria-label="Filter tree" className="w-full min-w-0 outline-none" />
    </label>
    <button className="flex h-[22px] w-full items-center gap-1 overflow-hidden border border-r-0 border-[#777] bg-white pl-px whitespace-nowrap">
      <Icon name="part" />
      Part1 (Default) &lt;&lt;Default&gt;_Display State 1&gt;
    </button>
    <ul>
      {treeItems.map((item) => (
        <li key={item.label} className="flex h-[22px] items-center">
          <span className="flex w-[23px] justify-center">
            {item.expandable && (
              <svg viewBox="0 0 5 8" className="h-2 w-[5px]" aria-hidden="true">
                <path d="M0 0v8l5-4z" fill="#555" />
              </svg>
            )}
          </span>
          <button
            className={clsx(
              "flex h-[22px] items-center gap-1 border pr-[3px] pl-px whitespace-nowrap",
              item.selected ? "border-[#6c9fc9] bg-[#a3c8e6]" : "border-transparent"
            )}
          >
            <Icon name={item.icon} className={item.icon === "plane" || item.selected ? "h-5 w-5" : "h-[18px] w-5"} />
            {item.label}
          </button>
        </li>
      ))}
    </ul>
    <div className="h-[3px] bg-[#4a86ae]" />
  </section>
);

const Callout = () => (
  <div className="pointer-events-none absolute top-0 left-0">
    <svg viewBox="0 172 460 400" className="h-[400px] w-[460px]" fill="none" stroke="#ec1c24" strokeWidth="8" strokeLinecap="round" aria-hidden="true">
      <ellipse cx="106" cy="481.500" rx="70" ry="27.500" />
      <path d="M237 475 178 485 218 517" strokeLinejoin="round" />
      <path d="M184 485C222 500 264 496 292 503C326 511 336 529 328 547C325 556 319 562 315 567" />
    </svg>
    <p className="ml-[57px] w-[420px] text-center font-['Liberation_Sans',Arial,sans-serif] text-[37px] leading-[41px] font-bold text-[#e11f27]">
      The feature is now a<br />
      3D feature called
      <br />
      "Extrude-Thin1"
    </p>
  </div>
);

export default function App() {
  return (
    <div className="flex min-h-screen w-full flex-col overflow-hidden bg-[#f7f7f7] font-['Noto_Sans','Open_Sans',sans-serif] text-[#111]">
      <TopBar />
      <ViewBar />
      <Ribbon />
      <main className="relative flex flex-1 flex-col">
        <Scene />
        <TabRow />
        <div className="relative flex flex-1">
          <Rail />
          <FeatureTree />
          <button
            aria-label="Collapse panel"
            className="mt-[382px] flex h-[39px] w-2 items-center border border-l-0 border-[#888] bg-[#f7f7f7]"
          >
            <span className="h-1.5 w-1.5 rounded-full border border-[#888] bg-[#ddd]" />
          </button>
          <div
            role="tooltip"
            className="absolute top-[112px] left-[47px] h-5 rounded-sm border border-[#ddd] bg-[#fbfbfb] px-1 text-[11px] leading-[18px] text-[#555] shadow-[2px_2px_2px_#777]"
          >
            Part1 (Default) &lt;&lt;Default&gt;_Display State 1&gt;
          </div>
          <Callout />
        </div>
      </main>
    </div>
  );
}
